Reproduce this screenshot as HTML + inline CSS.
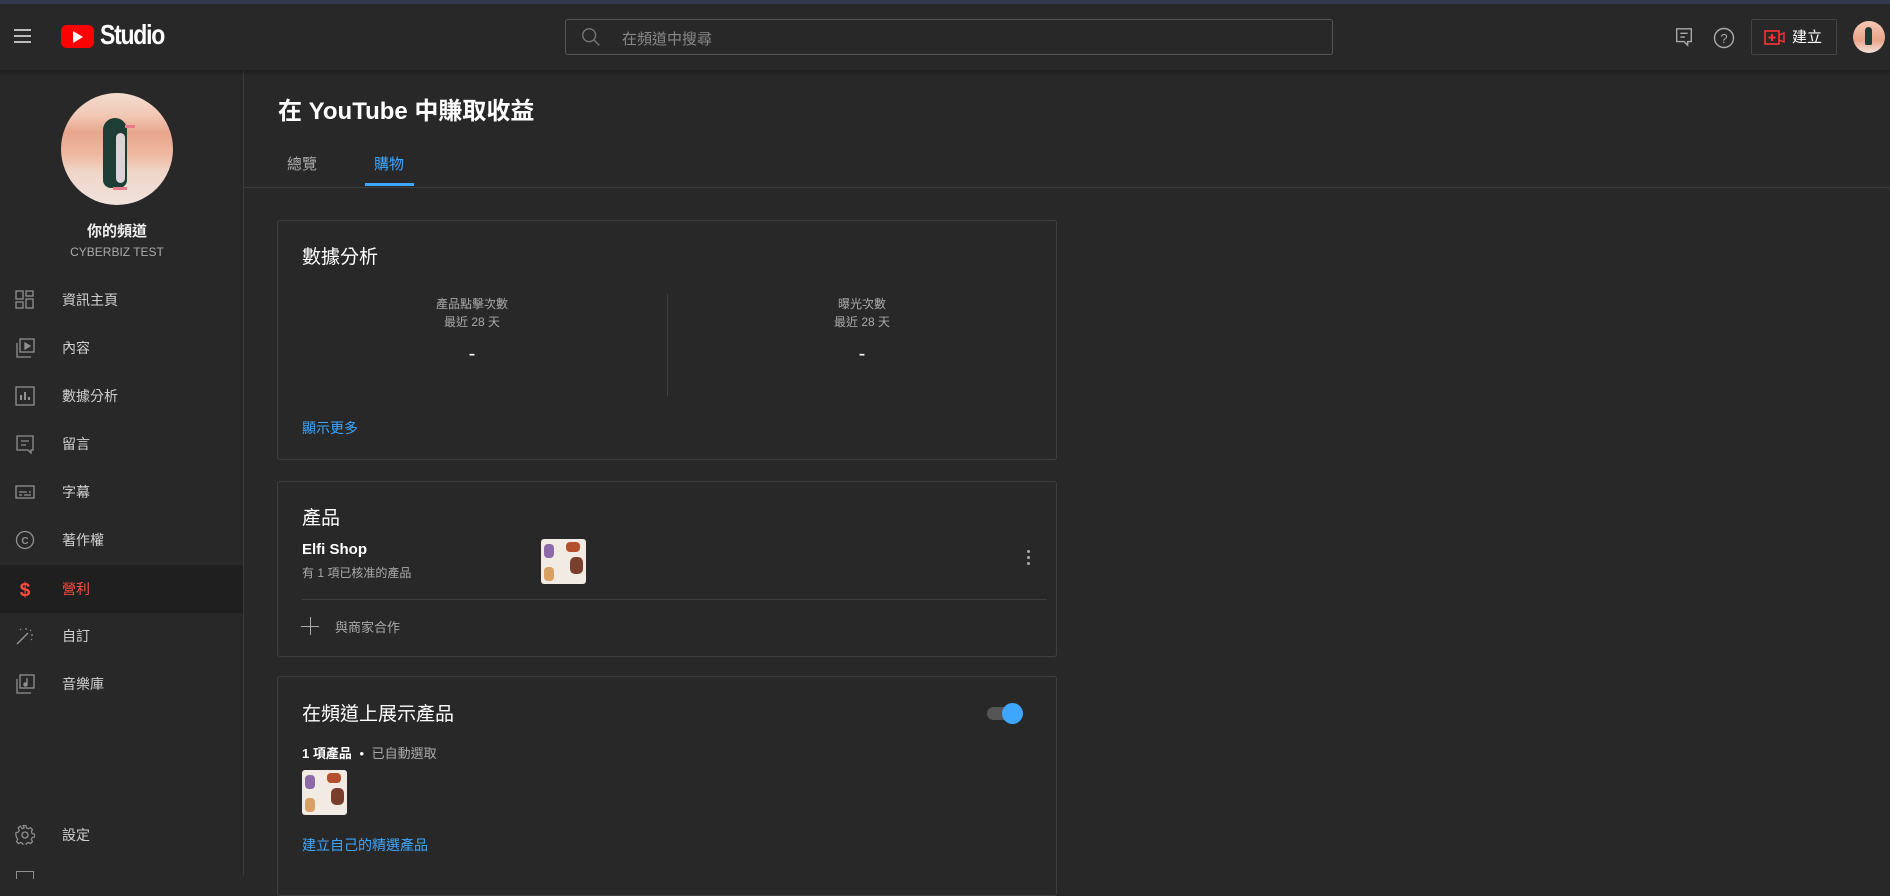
<!DOCTYPE html>
<html><head><meta charset="utf-8"><style>
*{box-sizing:border-box;margin:0;padding:0}
body{width:1890px;height:876px;overflow:hidden;background:#282828;font-family:"Liberation Sans","Noto Sans CJK TC",sans-serif;color:#fff;position:relative}
.abs{position:absolute}
.top{left:0;top:0;width:1890px;height:4px;background:#323a50}
.hdr{left:0;top:4px;width:1890px;height:66px;background:#282828;box-shadow:0 2px 4px rgba(0,0,0,.35);z-index:2}
.side{left:0;top:70px;width:244px;height:806px;border-right:1px solid #3a3a3a;background:#282828}
.nav{position:absolute;left:0;width:243px;height:48px;display:flex;align-items:center}
.nav svg{position:absolute;left:15px;width:20px;height:20px}
.nav span{position:absolute;left:62px;font-size:14px;color:#d0d0d0}
.card{position:absolute;left:277px;width:780px;border:1px solid #3e3e3e;border-radius:3px;background:#282828}
.t{position:absolute;white-space:nowrap}
.thumb{position:absolute;width:45px;height:45px;background:#f1ebe3;border-radius:3px;overflow:hidden}
</style></head><body>
<div class="abs top"></div>
<div class="abs hdr">
 <div class="abs" style="left:14px;top:25px;width:17px;height:2px;background:#bbb;box-shadow:0 6px 0 #bbb,0 12px 0 #bbb"></div>
 <div class="abs" style="left:61px;top:21px;width:33px;height:23px;background:#f00;border-radius:6px"></div>
 <div class="abs" style="left:73px;top:27px;width:0;height:0;border-left:10px solid #fff;border-top:6px solid transparent;border-bottom:6px solid transparent"></div>
 <div class="t" style="left:100px;top:15px;font-size:28px;font-weight:bold;letter-spacing:-1.5px;transform:scaleX(.82);transform-origin:left;color:#fff">Studio</div>
 <div class="abs" style="left:565px;top:15px;width:768px;height:36px;border:1px solid #555;border-radius:3px"></div>
 <svg class="abs" style="left:580px;top:22px" width="22" height="22" viewBox="0 0 24 24"><circle cx="10" cy="10" r="7" fill="none" stroke="#777" stroke-width="1.5"/><path d="M15 15l6 6" stroke="#777" stroke-width="1.5"/></svg>
 <div class="t" style="left:622px;top:24px;font-size:15px;color:#888">在頻道中搜尋</div>
 <svg class="abs" style="left:1673px;top:22px" width="22" height="22" viewBox="0 0 24 24"><path d="M4 3h16v14h-4v4l-4-4H4z" fill="none" stroke="#aaa" stroke-width="1.5"/><path d="M8 8h8M8 12h5" stroke="#aaa" stroke-width="1.5"/></svg>
 <svg class="abs" style="left:1712px;top:22px" width="24" height="24" viewBox="0 0 24 24"><circle cx="12" cy="12" r="9.5" fill="none" stroke="#aaa" stroke-width="1.4"/><text x="12" y="17" font-size="13" text-anchor="middle" fill="#aaa" font-family="Liberation Sans">?</text></svg>
 <div class="abs" style="left:1751px;top:15px;width:86px;height:36px;border:1px solid #444;border-radius:2px"></div>
 <svg class="abs" style="left:1764px;top:26px" width="21" height="15" viewBox="0 0 21 15"><rect x="1" y="1" width="14" height="13" fill="none" stroke="#f33" stroke-width="1.6"/><path d="M8 4v7M4.5 7.5h7" stroke="#f33" stroke-width="2"/><path d="M15 5l5-2v9l-5-2" fill="none" stroke="#f33" stroke-width="1.4"/></svg>
 <div class="t" style="left:1792px;top:22px;font-size:15px;color:#fff">建立</div>
 <div class="abs" style="left:1853px;top:17px;width:32px;height:32px;border-radius:50%;background:linear-gradient(#f4c9b6,#eaa28a 60%,#f3e3da)"></div>
 <div class="abs" style="left:1865px;top:23px;width:7px;height:18px;border-radius:4px 4px 2px 2px;background:#1f3a33"></div>
</div>
<div class="abs side">
 <div class="abs" style="left:61px;top:23px;width:112px;height:112px;border-radius:50%;overflow:hidden;background:linear-gradient(#f3dccf 0%,#f1c8b5 20%,#e8a68d 35%,#f0b8a0 55%,#efd5c8 70%,#f1e3dc 100%)">
  <div class="abs" style="left:42px;top:25px;width:24px;height:70px;border-radius:12px 12px 8px 8px;background:#1d3d35"></div>
  <div class="abs" style="left:55px;top:40px;width:9px;height:50px;border-radius:5px;background:#ddd3d6"></div>
  <div class="abs" style="left:64px;top:32px;width:10px;height:3px;background:#e87c8a"></div>
  <div class="abs" style="left:52px;top:94px;width:14px;height:3px;background:#e87c8a"></div>
 </div>
 <div class="t" style="left:0;width:234px;text-align:center;top:150px;font-size:15px;font-weight:bold;color:#eee">你的頻道</div>
 <div class="t" style="left:0;width:234px;text-align:center;top:175px;font-size:12px;color:#aaa">CYBERBIZ TEST</div>
 <div class="nav" style="top:206px"><svg viewBox="0 0 20 20" fill="none" stroke="#909090" stroke-width="1.3"><rect x="1" y="1" width="7" height="8"/><rect x="11" y="1" width="7" height="5"/><rect x="1" y="12" width="7" height="6"/><rect x="11" y="9" width="7" height="9"/></svg><span>資訊主頁</span></div>
 <div class="nav" style="top:254px"><svg viewBox="0 0 20 20" fill="none" stroke="#909090" stroke-width="1.3"><rect x="5" y="1" width="14" height="13"/><path d="M2 5v14h14"/><path d="M10 5l5 3-5 3z" fill="#909090"/></svg><span>內容</span></div>
 <div class="nav" style="top:302px"><svg viewBox="0 0 20 20" fill="none" stroke="#909090" stroke-width="1.3"><rect x="1" y="1" width="18" height="18"/><path d="M6 14V9M10 14V6M14 14v-3" stroke-width="2"/></svg><span>數據分析</span></div>
 <div class="nav" style="top:350px"><svg viewBox="0 0 20 20" fill="none" stroke="#909090" stroke-width="1.3"><path d="M2 2h16v14h-2v3l-3-3H2z"/><path d="M6 7h8M6 11h5"/></svg><span>留言</span></div>
 <div class="nav" style="top:398px"><svg viewBox="0 0 20 20" fill="none" stroke="#909090" stroke-width="1.3"><rect x="1" y="4" width="18" height="12"/><path d="M4 10h8M14 10h2M4 13h3M9 13h7"/></svg><span>字幕</span></div>
 <div class="nav" style="top:446px"><svg viewBox="0 0 20 20" fill="none" stroke="#909090" stroke-width="1.3"><circle cx="10" cy="10" r="8.5"/><text x="10" y="14" font-size="10" text-anchor="middle" fill="#909090" stroke="none" font-family="Liberation Sans" font-weight="bold">C</text></svg><span>著作權</span></div>
 <div class="nav" style="top:495px;background:#1f1f1f"><svg viewBox="0 0 20 20"><text x="10" y="17" font-size="19" text-anchor="middle" fill="#ff4e45" font-family="Liberation Sans" font-weight="bold">$</text></svg><span style="color:#ff4e45">營利</span></div>
 <div class="nav" style="top:542px"><svg viewBox="0 0 20 20" fill="none" stroke="#909090" stroke-width="1.5"><path d="M2 18L13 7"/><path d="M11 2v2M16 4l-1 1M18 9h-2M5 3l1 1M17 14l-1-1" stroke-width="1.2"/></svg><span>自訂</span></div>
 <div class="nav" style="top:590px"><svg viewBox="0 0 20 20" fill="none" stroke="#909090" stroke-width="1.3"><rect x="5" y="1" width="14" height="13"/><path d="M2 5v14h14"/><path d="M12 4v6" /><circle cx="10.5" cy="10.5" r="1.6" fill="#909090"/></svg><span>音樂庫</span></div>
 <div class="nav" style="top:741px"><svg viewBox="0 0 20 20" fill="none" stroke="#909090" stroke-width="1.3"><circle cx="10" cy="10" r="3"/><path d="M8.5 1h3l.5 2.5 2 1 2.3-1.2 2.1 2.1-1.2 2.3 1 2 2.5.5v3l-2.5.5-1 2 1.2 2.3-2.1 2.1-2.3-1.2-2 1-.5 2.5h-3l-.5-2.5-2-1-2.3 1.2-2.1-2.1 1.2-2.3-1-2L1 11.5v-3l2.5-.5 1-2-1.2-2.3 2.1-2.1L7.7 4.5l2-1z" transform="translate(0 -.5) scale(.95)"/></svg><span>設定</span></div>
 <div class="abs" style="left:16px;top:801px;width:18px;height:8px;border:1.3px solid #909090;border-bottom:none"></div>
</div>

<div class="t" style="left:278px;top:91px;font-size:24px;font-weight:bold;color:#fff">在 YouTube 中賺取收益</div>
<div class="t" style="left:287px;top:153px;font-size:15px;color:#aaa">總覽</div>
<div class="t" style="left:374px;top:153px;font-size:15px;color:#3ea6ff">購物</div>
<div class="abs" style="left:365px;top:183px;width:49px;height:3px;background:#3ea6ff"></div>
<div class="abs" style="left:244px;top:187px;width:1646px;height:1px;background:#3e3e3e"></div>

<div class="card" style="top:220px;height:240px">
 <div class="t" style="left:24px;top:21px;font-size:19px;color:#fff">數據分析</div>
 <div class="t" style="left:0;width:388px;text-align:center;top:74px;font-size:12px;color:#aaa;line-height:18px">產品點擊次數<br>最近 28 天</div>
 <div class="t" style="left:0;width:388px;text-align:center;top:122px;font-size:20px;color:#fff">-</div>
 <div class="abs" style="left:389px;top:73px;width:1px;height:102px;background:#3e3e3e"></div>
 <div class="t" style="left:390px;width:388px;text-align:center;top:74px;font-size:12px;color:#aaa;line-height:18px">曝光次數<br>最近 28 天</div>
 <div class="t" style="left:390px;width:388px;text-align:center;top:122px;font-size:20px;color:#fff">-</div>
 <div class="t" style="left:24px;top:197px;font-size:14px;color:#3ea6ff">顯示更多</div>
</div>

<div class="card" style="top:481px;height:176px">
 <div class="t" style="left:24px;top:21px;font-size:19px;color:#fff">產品</div>
 <div class="t" style="left:24px;top:59px;font-size:15px;font-weight:bold;color:#fff">Elfi Shop</div>
 <div class="t" style="left:24px;top:82px;font-size:12px;color:#aaa">有 1 項已核准的產品</div>
 <div class="thumb" style="left:263px;top:57px"><div class="abs" style="left:3px;top:5px;width:10px;height:14px;background:#8c6aa8;border-radius:4px"></div><div class="abs" style="left:25px;top:3px;width:14px;height:10px;background:#b5502e;border-radius:4px"></div><div class="abs" style="left:29px;top:18px;width:13px;height:17px;background:#7a3f2c;border-radius:5px"></div><div class="abs" style="left:3px;top:28px;width:10px;height:14px;background:#d8a062;border-radius:4px"></div></div>
 <div class="abs" style="left:749px;top:68px;width:3px;height:3px;background:#aaa;border-radius:50%;box-shadow:0 6px 0 #aaa,0 12px 0 #aaa"></div>
 <div class="abs" style="left:24px;top:117px;width:745px;height:1px;background:#3e3e3e"></div>
 <div class="abs" style="left:32px;top:135px;width:1px;height:18px;background:#aaa"></div>
 <div class="abs" style="left:23px;top:144px;width:18px;height:1px;background:#aaa"></div>
 <div class="t" style="left:57px;top:135px;font-size:13px;color:#aaa">與商家合作</div>
</div>

<div class="card" style="top:676px;height:220px">
 <div class="t" style="left:24px;top:22px;font-size:19px;color:#fff">在頻道上展示產品</div>
 <div class="abs" style="left:709px;top:30px;width:28px;height:13px;border-radius:7px;background:#555"></div>
 <div class="abs" style="left:724px;top:26px;width:21px;height:21px;border-radius:50%;background:#3ea6ff"></div>
 <div class="t" style="left:24px;top:66px;font-size:13px;color:#fff"><b>1 項產品</b> <span style="margin:0 4px">•</span> <span style="color:#aaa">已自動選取</span></div>
 <div class="thumb" style="left:24px;top:93px"><div class="abs" style="left:3px;top:5px;width:10px;height:14px;background:#8c6aa8;border-radius:4px"></div><div class="abs" style="left:25px;top:3px;width:14px;height:10px;background:#b5502e;border-radius:4px"></div><div class="abs" style="left:29px;top:18px;width:13px;height:17px;background:#7a3f2c;border-radius:5px"></div><div class="abs" style="left:3px;top:28px;width:10px;height:14px;background:#d8a062;border-radius:4px"></div></div>
 <div class="t" style="left:24px;top:158px;font-size:14px;color:#3ea6ff">建立自己的精選產品</div>
</div>
</body></html>
